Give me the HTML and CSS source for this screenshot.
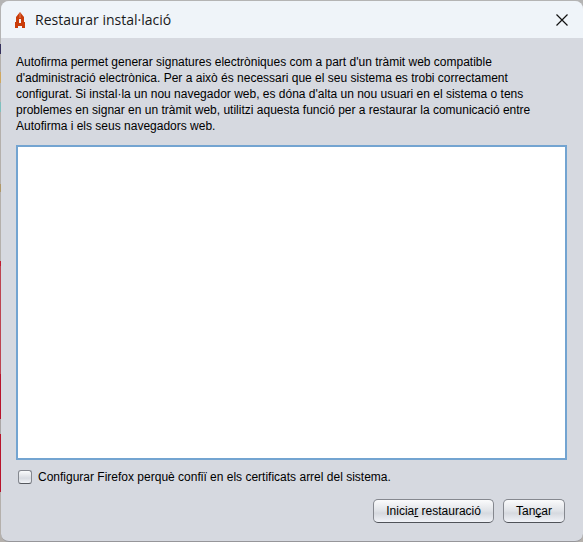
FILE: index.html
```html
<!DOCTYPE html>
<html lang="ca">
<head>
<meta charset="utf-8">
<title>Restaurar instal·lació</title>
<link rel="stylesheet" href="styles.css">
</head>
<body>
<main class="dialog" role="dialog" aria-labelledby="dialog-title">
  <header class="titlebar">
    <svg class="logo" viewBox="0 0 12 16" aria-hidden="true">
      <path fill="#c93c0a" fill-rule="evenodd" d="M6 0 10 5v5h1v6H8v-2H4v2H1v-6h1V5zM5 7v4h2V7z"/>
      <path stroke="#f0a080" stroke-width=".7" d="M6 1v5"/>
    </svg>
    <h1 class="title" id="dialog-title">Restaurar instal·lació</h1>
    <button class="close" type="button" aria-label="Tancar la finestra">
      <svg viewBox="0 0 12 12" aria-hidden="true"><path d="M.5.5l11 11M11.5.5l-11 11" fill="none" stroke="#111" stroke-width="1.2"/></svg>
    </button>
  </header>
  <div class="content">
    <p class="intro" id="intro">Autofirma permet generar signatures electròniques com a part d'un tràmit web compatible<br>
      d'administració electrònica. Per a això és necessari que el seu sistema es trobi correctament<br>
      configurat. Si instal·la un nou navegador web, es dóna d'alta un nou usuari en el sistema o tens<br>
      problemes en signar en un tràmit web, utilitzi aquesta funció per a restaurar la comunicació entre<br>
      Autofirma i els seus navegadors web.</p>
    <textarea class="log" aria-labelledby="intro" readonly></textarea>
    <label class="option"><input class="check" type="checkbox">Configurar Firefox perquè confiï en els certificats arrel del sistema.</label>
    <div class="actions">
      <button class="button" type="button">Inicia<u>r</u> restauració</button>
      <button class="button" type="button">Tan<u>ç</u>ar</button>
    </div>
  </div>
</main>
</body>
</html>
```
FILE: styles.css
```css
* {
  box-sizing: border-box;
}

body {
  display: flex;
  min-height: 100vh;
  margin: 0;
  padding: 1px 0 0 1px;
  background: linear-gradient(
    #b4b4b4 44px, #35305c 44px 54px, #b4b0ac 54px 72px, #d0a860 72px 83px,
    #b4b4b4 83px 102px, #7fc0be 102px 112px, #b4b0ac 112px 184px,
    #b09868 184px 192px, #b4b0ac 192px 261px, #c01c30 261px 266px,
    #bd4450 266px 374px, #b8142c 374px 419px, #aaa6a6 419px 434px,
    #b8142c 434px 492px, #b4b0ac 492px);
  color: #000;
  font: 12px/16px "Liberation Sans", Arial, sans-serif;
}

.dialog {
  display: flex;
  flex: 1;
  flex-direction: column;
  overflow: hidden;
  border-bottom: 1px solid #96969a;
  border-radius: 8px;
  background: #d6d9e0;
}

.titlebar {
  display: flex;
  align-items: center;
  height: 37px;
  padding: 0 15px 0 13px;
  background: #eff4f9;
}

.logo {
  width: 12px;
  height: 16px;
}

.title {
  flex: 1;
  margin: 0 0 0 9px;
  color: #191919;
  font: 14px/20px "Open Sans", "Segoe UI", sans-serif;
  font-feature-settings: "locl" 0;
}

.close {
  display: flex;
  padding: 0;
  border: 0;
  background: none;
}

.close svg {
  width: 12px;
  height: 12px;
}

.content {
  display: flex;
  flex: 1;
  flex-direction: column;
  padding: 16px 16px 18px 15px;
}

.intro {
  margin: 0 0 12px;
  white-space: nowrap;
}

.log {
  flex: 1;
  margin: 0 1px;
  padding: 4px;
  border: 1px solid #8e98a6;
  outline: 2px solid #73a4d1;
  outline-offset: -1px;
  background: #fff;
  font: inherit;
  resize: none;
}

.option {
  display: flex;
  align-items: center;
  gap: 6px;
  margin: 10px 0 14px 2px;
}

.check {
  width: 14px;
  height: 14px;
  margin: 0;
  border: 1px solid #84878e;
  border-bottom-color: #55585e;
  border-radius: 3px;
  background: linear-gradient(#fafbfc, #d8dbe1 60%, #f2f4f8);
  appearance: none;
}

.actions {
  display: flex;
  justify-content: flex-end;
  gap: 9px;
  padding-right: 2px;
}

.button {
  height: 24px;
  padding: 0 12px;
  border: 1px solid #85888f;
  border-bottom-color: #505359;
  border-radius: 5px;
  background: linear-gradient(#fbfbfc, #dfe2e7 50%, #d6d9df 60%, #f1f3f8);
  color: #000;
  font: inherit;
}

.button u {
  text-decoration-skip-ink: none;
}
```
